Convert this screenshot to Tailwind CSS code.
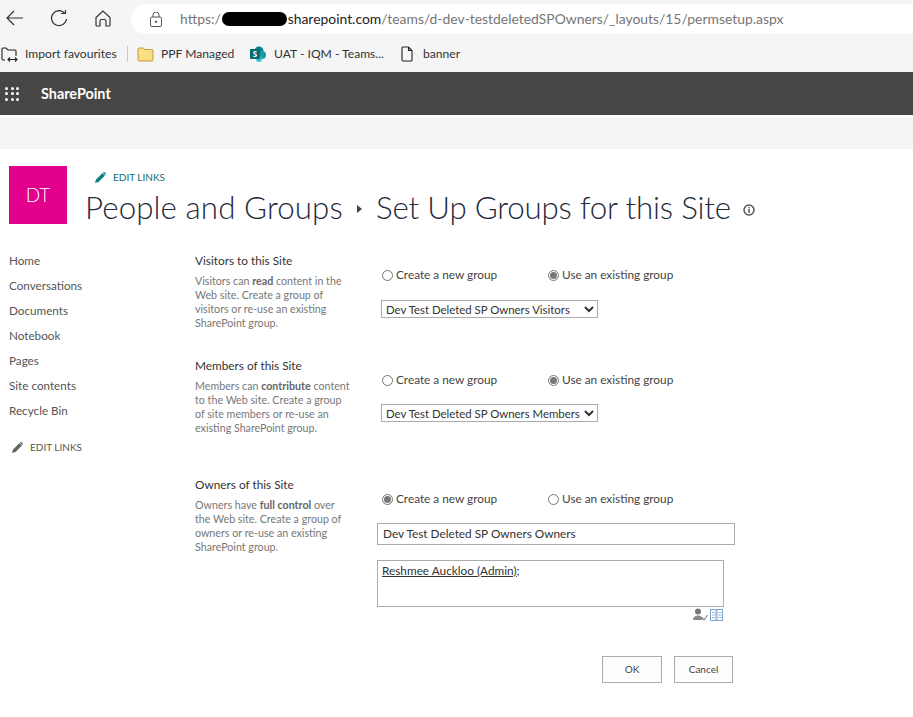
<!DOCTYPE html>
<html lang="en">
<head>
  <meta charset="UTF-8" />
  <title>Set Up Groups for this Site</title>
  <script src="https://cdn.jsdelivr.net/npm/@tailwindcss/browser@4"></script>
</head>
<body class="w-[913px] h-[717px] overflow-hidden bg-white font-['Lato','Open_Sans',sans-serif] text-[#444]">

  <!-- Browser toolbar -->
  <div class="h-[34px] bg-[#f5f5f5] flex items-start">
    <div class="w-[131px] h-[34px] flex items-center relative text-[#333]">
      <svg class="absolute left-[6px] top-[10px]" width="18" height="16" viewBox="0 0 18 16" fill="none" stroke="#333" stroke-width="1.2"><path d="M1 8h16M8 1 1 8l7 7"/></svg>
      <svg class="absolute left-[50px] top-[10px]" width="18" height="18" viewBox="0 0 18 18" fill="none" stroke="#333" stroke-width="1.2"><path d="M15 3.5A7.5 7.5 0 1 0 16.500 9"/><path d="M11 3.500h4.500V0"/></svg>
      <svg class="absolute left-[95px] top-[10px]" width="16" height="17" viewBox="0 0 16 17" fill="none" stroke="#333" stroke-width="1.2"><path d="M1 7.500 8 1l7 6.500V15a1 1 0 0 1-1 1h-3v-5a1.500 1.500 0 0 0-1.500-1.500h-3A1.500 1.500 0 0 0 5 11v5H2a1 1 0 0 1-1-1Z"/></svg>
    </div>
    <div class="mt-[4px] flex-1 h-[30px] bg-white rounded-l-[15px] flex items-center relative text-[13.900px] text-[#767676] whitespace-nowrap">
      <svg class="ml-[19px] mr-[18px]" width="12" height="15" viewBox="0 0 12 15" fill="none" stroke="#555" stroke-width="1"><rect x="0.500" y="5" width="11" height="9.500" rx="1.500"/><path d="M3 5V3a3 3 0 0 1 6 0v2"/><circle cx="6" cy="9.700" r="0.800" fill="#555"/></svg>
      <span>https:/</span><span class="w-[65px] h-[14px] bg-black rounded-full mx-[1px]"></span><span class="text-[#222]">sharepoint.com</span><span>/teams/d-dev-testdeletedSPOwners/_layouts/15/permsetup.aspx</span>
    </div>
  </div>

  <!-- Favourites bar -->
  <div class="h-[38px] bg-[#f5f5f5] flex items-center pl-[1px] pt-[2px] text-[12.100px] text-[#333] whitespace-nowrap">
    <svg width="18" height="16" viewBox="0 0 18 16" fill="none" stroke="#222" stroke-width="1.100"><path d="M4 14H2a1 1 0 0 1-1-1V3a1 1 0 0 1 1-1h3l2 2h7a1 1 0 0 1 1 1v5"/><path d="M7 13.500h9M9 11.500l-2 2 2 2M14 11.500l2 2-2 2"/></svg>
    <span class="ml-[6px] w-[91px]">Import favourites</span>
    <span class="ml-[11px] w-px h-[16px] bg-[#c8c8c8]"></span>
    <svg class="ml-[9px]" width="17" height="15" viewBox="0 0 17 15"><path d="M1 2.500A1.500 1.500 0 0 1 2.500 1h3.700l1.800 1.500h6.500A1.500 1.500 0 0 1 16 4v8.500a1.500 1.500 0 0 1-1.500 1.500h-12A1.500 1.500 0 0 1 1 12.500Z" fill="#fbdf85" stroke="#c19a3b"/></svg>
    <span class="ml-[7px] w-[72px]">PPF Managed</span>
    <svg class="ml-[17px]" width="17" height="16" viewBox="0 0 17 16"><circle cx="9" cy="5" r="4.500" fill="#038387"/><circle cx="12" cy="9" r="4" fill="#1a9ba1"/><circle cx="9" cy="13" r="3" fill="#37c6d0"/><rect x="0" y="3" width="10" height="10" rx="1" fill="#036c70"/><text x="5" y="11" font-size="8" font-weight="700" fill="#fff" text-anchor="middle" font-family="Open Sans">S</text></svg>
    <span class="ml-[7px] w-[109px]">UAT - IQM - Teams...</span>
    <svg class="ml-[18px]" width="12" height="16" viewBox="0 0 12 16" fill="none" stroke="#222" stroke-width="1.100"><path d="M1 2a1 1 0 0 1 1-1h5.500L11 4.500V14a1 1 0 0 1-1 1H2a1 1 0 0 1-1-1Z"/><path d="M7.500 1v3.500H11"/></svg>
    <span class="ml-[10px]">banner</span>
  </div>

  <!-- Suite bar -->
  <div class="h-[43px] bg-[#484644] flex items-center text-white">
    <div class="ml-[5px] grid grid-cols-3 gap-[2.500px] w-[14px]">
      <i class="size-[3px] bg-white rounded-full"></i><i class="size-[3px] bg-white rounded-full"></i><i class="size-[3px] bg-white rounded-full"></i>
      <i class="size-[3px] bg-white rounded-full"></i><i class="size-[3px] bg-white rounded-full"></i><i class="size-[3px] bg-white rounded-full"></i>
      <i class="size-[3px] bg-white rounded-full"></i><i class="size-[3px] bg-white rounded-full"></i><i class="size-[3px] bg-white rounded-full"></i>
    </div>
    <span class="ml-[22px] text-[14.400px] font-bold">SharePoint</span>
  </div>
  <div class="mt-[2px] h-[32px] bg-[#f4f4f4]"></div>

  <!-- Site header -->
  <div class="h-[85px] pt-[17px] pl-[9px] flex">
    <div class="size-[58px] bg-[#e3008c] text-white text-[19px] font-light flex items-center justify-center">DT</div>
    <div class="ml-[18px]">
      <div class="flex items-center gap-[7px] ml-[10px] h-[23px] text-[10px] text-[#0f6e75]">
        <svg width="11" height="11" viewBox="0 0 11 11" fill="#11807f"><path d="M0 11l1-3.500L7.500 1 10 3.500 3.500 10ZM8.200.3a1 1 0 0 1 1.400 0l1 1a1 1 0 0 1 0 1.400l-.3.300L7.900.6Z"/></svg>
        <span>EDIT LINKS</span>
      </div>
      <div class="flex items-center h-[36px] text-[31.300px] font-light text-[#1f2a3c] whitespace-nowrap">
        <span class="w-[258px] tracking-[0.100px]">People and Groups</span>
        <svg class="ml-[14px] mr-[14px] mt-[4px]" width="5" height="8" viewBox="0 0 5 8" fill="#444"><path d="M0 0l5 4-5 4Z"/></svg>
        <span class="w-[356px] tracking-[-0.200px]">Set Up Groups for this Site</span>
        <svg class="ml-[11px] mt-[6px]" width="12" height="12" viewBox="0 0 12 12" fill="none"><circle cx="6" cy="6" r="5" stroke="#555" stroke-width="1.500"/><path d="M6 5v4M6 3v1.200" stroke="#555" stroke-width="1.500"/></svg>
      </div>
    </div>
  </div>

  <div class="flex">
    <!-- Left nav -->
    <nav class="w-[195px] shrink-0 pl-[9px] pt-[14px] text-[11.700px] text-[#555]">
      <ul class="flex flex-col">
        <li class="h-[25px] leading-[25px]">Home</li>
        <li class="h-[25px] leading-[25px]">Conversations</li>
        <li class="h-[25px] leading-[25px]">Documents</li>
        <li class="h-[25px] leading-[25px]">Notebook</li>
        <li class="h-[25px] leading-[25px]">Pages</li>
        <li class="h-[25px] leading-[25px]">Site contents</li>
        <li class="h-[25px] leading-[25px]">Recycle Bin</li>
      </ul>
      <div class="mt-[17px] ml-[3px] flex items-center gap-[7px] text-[10px] text-[#555]">
        <svg width="11" height="11" viewBox="0 0 11 11" fill="#666"><path d="M0 11l1-3.500L7.500 1 10 3.500 3.500 10ZM8.200.3a1 1 0 0 1 1.400 0l1 1a1 1 0 0 1 0 1.400l-.3.300L7.900.6Z"/></svg>
        <span>EDIT LINKS</span>
      </div>
    </nav>

    <!-- Form -->
    <main class="flex-1 pt-[15px] relative">
      <section class="h-[105px] flex">
        <div class="w-[187px] shrink-0 pt-[3px]">
          <h3 class="text-[11.800px] leading-[18px] text-[#333]">Visitors to this Site</h3>
          <p class="mt-[4px] w-[160px] text-[10.700px] leading-[14px] text-[#777]">Visitors can <b class="text-[#666]">read</b> content in the Web site. Create a group of visitors or re-use an existing SharePoint group.</p>
        </div>
        <div class="pt-[16px]">
          <div class="flex items-center h-[20px] text-[11.800px] text-[#444]">
            <span class="size-[11px] rounded-full border border-[#777]"></span>
            <span class="ml-[3px] w-[152px]">Create a new group</span>
            <span class="size-[11px] rounded-full border border-[#777] flex items-center justify-center"><i class="size-[7px] rounded-full bg-[#777]"></i></span>
            <span class="ml-[3px]">Use an existing group</span>
          </div>
          <select class="mt-[15px] -ml-[1px] w-[217px] h-[18px] border border-[#ababab] text-[11.400px] text-[#333] bg-white">
            <option>Dev Test Deleted SP Owners Visitors</option>
          </select>
        </div>
      </section>

      <section class="h-[119px] flex">
        <div class="w-[187px] shrink-0 pt-[3px]">
          <h3 class="text-[11.800px] leading-[18px] text-[#333]">Members of this Site</h3>
          <p class="mt-[4px] w-[158px] text-[10.700px] leading-[14px] text-[#777]">Members can <b class="text-[#666]">contribute</b> content to the Web site. Create a group of site members or re-use an existing SharePoint group.</p>
        </div>
        <div class="pt-[16px]">
          <div class="flex items-center h-[20px] text-[11.800px] text-[#444]">
            <span class="size-[11px] rounded-full border border-[#777]"></span>
            <span class="ml-[3px] w-[152px]">Create a new group</span>
            <span class="size-[11px] rounded-full border border-[#777] flex items-center justify-center"><i class="size-[7px] rounded-full bg-[#777]"></i></span>
            <span class="ml-[3px]">Use an existing group</span>
          </div>
          <select class="mt-[14px] -ml-[1px] w-[217px] h-[18px] border border-[#ababab] text-[11.400px] text-[#333] bg-white">
            <option>Dev Test Deleted SP Owners Members</option>
          </select>
        </div>
      </section>

      <section class="flex">
        <div class="w-[187px] shrink-0 pt-[3px]">
          <h3 class="text-[11.800px] leading-[18px] text-[#333]">Owners of this Site</h3>
          <p class="mt-[4px] w-[155px] text-[10.700px] leading-[14px] text-[#777]">Owners have <b class="text-[#666]">full control</b> over the Web site. Create a group of owners or re-use an existing SharePoint group.</p>
        </div>
        <div class="pt-[16px]">
          <div class="flex items-center h-[20px] text-[11.800px] text-[#444]">
            <span class="size-[11px] rounded-full border border-[#777] flex items-center justify-center"><i class="size-[7px] rounded-full bg-[#777]"></i></span>
            <span class="ml-[3px] w-[152px]">Create a new group</span>
            <span class="size-[11px] rounded-full border border-[#777]"></span>
            <span class="ml-[3px]">Use an existing group</span>
          </div>
          <div class="mt-[14px] -ml-[5px] w-[358px] h-[22px] border border-[#ababab] pl-[5px] text-[11.800px] leading-[20px] text-[#333]">Dev Test Deleted SP Owners Owners</div>
          <div class="mt-[15px] -ml-[5px] w-[347px] h-[47px] border border-[#ababab] pl-[4px] pt-[1px] text-[11.800px] leading-[18px] text-[#333]"><span class="underline">Reshmee Auckloo (Admin)</span>;</div>
          <div class="-ml-[5px] w-[347px] h-[15px] flex justify-end items-center gap-[2px]">
            <svg width="15" height="13" viewBox="0 0 15 13"><circle cx="5" cy="3.500" r="3" fill="#777"/><path d="M0 12c0-3 2-4.500 5-4.500S9 9 9 12Z" fill="#888"/><path d="M8.500 9l2.500 3 3.500-5" fill="none" stroke="#888" stroke-width="1.200"/></svg>
            <svg width="14" height="12" viewBox="0 0 14 12" fill="none" stroke="#7ea5cf"><rect x="0.500" y="0.500" width="5.500" height="11"/><rect x="7" y="0.500" width="5.500" height="11"/><path d="M2 3.500h3M2 6h3M2 8.500h3M8.500 3.500h3M8.500 6h3M8.500 8.500h3" stroke-width="0.800"/></svg>
          </div>
          <div class="mt-[34px] flex gap-[12px] ml-[220px] text-[10px] text-[#444]">
            <button class="w-[60px] h-[27px] bg-[#fdfdfd] border border-[#ababab]">OK</button>
            <button class="w-[59px] h-[27px] bg-[#fdfdfd] border border-[#ababab]">Cancel</button>
          </div>
        </div>
      </section>
    </main>
  </div>
</body>
</html>
